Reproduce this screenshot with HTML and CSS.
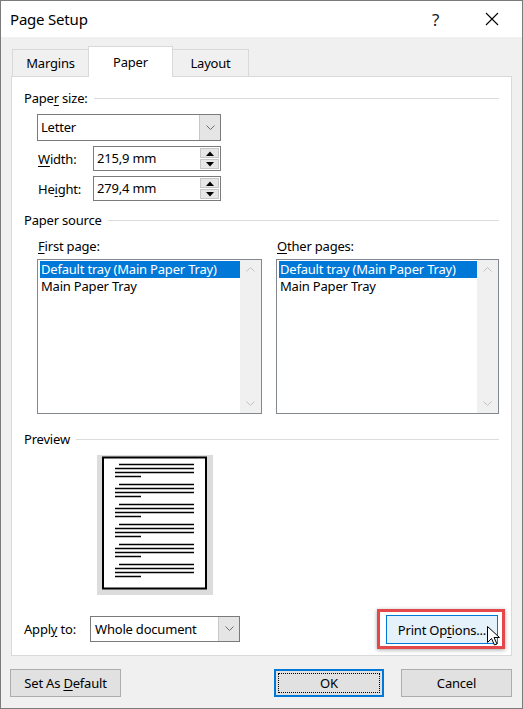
FILE: index.html
```html
<!DOCTYPE html>
<html>
<head>
<meta charset="utf-8">
<title>Page Setup</title>
<link rel="stylesheet" href="styles.css">
</head>
<body>
<div class="window">
  <div class="titlebar">
    <span class="title">Page Setup</span>
    <span class="help">?</span>
    <svg class="close" width="14" height="14" viewBox="0 0 14 14"><path d="M1 1L13 13M13 1L1 13" stroke="#000" stroke-width="1.1" fill="none"/></svg>
  </div>

  <div class="tabs">
    <div class="tab">Margins</div>
    <div class="tab active">Paper</div>
    <div class="tab">Layout</div>
  </div>

  <div class="panel">
    <div class="group-head"><span>Pape<u>r</u> size:</span><i></i></div>
    <div class="indent">
      <div class="combo wide">
        <span class="combo-text">Letter</span>
        <span class="combo-btn"><svg width="9" height="6" viewBox="0 0 9 6"><path d="M0.5 0.5L4.5 4.5L8.5 0.5" stroke="#6d6d6d" fill="none"/></svg></span>
      </div>
      <div class="field-row">
        <span class="field-label"><u>W</u>idth:</span>
        <div class="spin">
          <span class="spin-text">215,9 mm</span>
          <span class="spin-btns">
            <span class="arrow"><svg width="8" height="5" viewBox="0 0 8 5"><path d="M0 5L4 0.5L8 5Z" fill="#000"/></svg></span>
            <span class="arrow"><svg width="8" height="5" viewBox="0 0 8 5"><path d="M0 0L4 4.5L8 0Z" fill="#000"/></svg></span>
          </span>
        </div>
      </div>
      <div class="field-row">
        <span class="field-label">He<u>i</u>ght:</span>
        <div class="spin">
          <span class="spin-text">279,4 mm</span>
          <span class="spin-btns">
            <span class="arrow"><svg width="8" height="5" viewBox="0 0 8 5"><path d="M0 5L4 0.5L8 5Z" fill="#000"/></svg></span>
            <span class="arrow"><svg width="8" height="5" viewBox="0 0 8 5"><path d="M0 0L4 4.5L8 0Z" fill="#000"/></svg></span>
          </span>
        </div>
      </div>
    </div>

    <div class="group-head source-head"><span>Paper source</span><i></i></div>
    <div class="sources">
      <div class="source first">
        <div class="list-label"><u>F</u>irst page:</div>
        <div class="listbox">
          <div class="items">
            <div class="item sel">Default tray (Main Paper Tray)</div>
            <div class="item">Main Paper Tray</div>
          </div>
          <div class="scroll">
            <svg width="9" height="6" viewBox="0 0 9 6"><path d="M0.5 5.5L4.5 1.5L8.5 5.5" stroke="#c2c2c2" fill="none"/></svg>
            <svg width="9" height="6" viewBox="0 0 9 6"><path d="M0.5 0.5L4.5 4.5L8.5 0.5" stroke="#c2c2c2" fill="none"/></svg>
          </div>
        </div>
      </div>
      <div class="source other">
        <div class="list-label"><u>O</u>ther pages:</div>
        <div class="listbox">
          <div class="items">
            <div class="item sel">Default tray (Main Paper Tray)</div>
            <div class="item">Main Paper Tray</div>
          </div>
          <div class="scroll">
            <svg width="9" height="6" viewBox="0 0 9 6"><path d="M0.5 5.5L4.5 1.5L8.5 5.5" stroke="#c2c2c2" fill="none"/></svg>
            <svg width="9" height="6" viewBox="0 0 9 6"><path d="M0.5 0.5L4.5 4.5L8.5 0.5" stroke="#c2c2c2" fill="none"/></svg>
          </div>
        </div>
      </div>
    </div>

    <div class="group-head preview-head"><span>Preview</span><i></i></div>
    <div class="preview">
      <svg width="116" height="140" viewBox="0 0 116 140">
        <rect x="0" y="0" width="116" height="140" fill="#dcdcdc"/>
        <rect x="6" y="2.5" width="103" height="131" fill="#fff" stroke="#000" stroke-width="2"/>
        <g stroke="#000" stroke-width="1.3">
          <path d="M22 9.5H97M18 13.5H97M18 17.5H97M18 21.5H44"/>
          <path d="M22 29.5H97M18 33.5H97M18 37.5H97M18 41.5H44"/>
          <path d="M22 49.5H97M18 53.5H97M18 57.5H97M18 61.5H44"/>
          <path d="M22 69.5H97M18 73.5H97M18 77.5H97M18 81.5H44"/>
          <path d="M22 89.5H97M18 93.5H97M18 97.5H97M18 101.5H44"/>
          <path d="M22 109.5H97M18 113.5H97M18 117.5H97M18 121.5H44"/>
        </g>
      </svg>
    </div>

    <div class="apply-row">
      <span class="apply-label">Appl<u>y</u> to:</span>
      <div class="combo apply">
        <span class="combo-text">Whole document</span>
        <span class="combo-btn"><svg width="9" height="6" viewBox="0 0 9 6"><path d="M0.5 0.5L4.5 4.5L8.5 0.5" stroke="#6d6d6d" fill="none"/></svg></span>
      </div>
      <div class="highlight">
        <div class="btn hover"><span>Print Op<u>t</u>ions...</span></div>
        <svg class="cursor" width="13" height="20" viewBox="0 0 13 20"><path d="M0.5 0.5V16.5L4.5 12.5L7.5 19L10 18L7 11.5H12.5Z" fill="#fff" stroke="#000" stroke-width="1"/></svg>
      </div>
    </div>
  </div>

  <div class="footer">
    <div class="btn"><span>Set As <u>D</u>efault</span></div>
    <div class="btn ok"><span class="focus">OK</span></div>
    <div class="btn"><span>Cancel</span></div>
  </div>
</div>
</body>
</html>
```

FILE: styles.css
```css
* { margin: 0; padding: 0; box-sizing: border-box; }
body { font-family: "Noto Sans", "DejaVu Sans", sans-serif; font-size: 13px; letter-spacing: -0.2px; color: #000; background: #fff; }
u { text-decoration: underline; text-underline-offset: 2px; }

.window { width: 523px; height: 709px; border: 1px solid #7b7b7b; background: #f0f0f0; display: flex; flex-direction: column; }

.titlebar { height: 36px; background: #fff; display: flex; align-items: center; }
.title { font-size: 15px; padding-left: 9px; flex: 1; }
.help { font-size: 17px; width: 12px; margin-right: 41px; color: #222; }
.close { margin-right: 23px; }

.tabs { display: flex; align-items: flex-end; height: 39px; padding-left: 11px; position: relative; z-index: 1; }
.tab { width: 77px; height: 27px; border: 1px solid #d9d9d9; border-bottom: none; background: #f0f0f0; text-align: center; line-height: 26px; }
.tab + .tab { margin-left: -1px; }
.tab.active { width: 85px; height: 31px; background: #fff; margin-bottom: -1px; line-height: 30px; padding-bottom: 2px; }

.panel { margin: 0 10px; height: 580px; background: #fff; border: 1px solid #d9d9d9; padding: 13px 12px 0 12px; }

.group-head { display: flex; align-items: center; height: 16px; line-height: 16px; }
.group-head i { flex: 1; border-top: 1px solid #dcdcdc; margin-left: 6px; }

.indent { padding-left: 13px; }

.combo { display: flex; height: 27px; border: 1px solid #7a7a7a; background: #fff; }
.combo.wide { width: 184px; margin-top: 8px; }
.combo-text { flex: 1; padding-left: 3px; line-height: 25px; }
.combo-btn { width: 21px; background: #e5e5e5; border-left: 1px solid #c8c8c8; display: flex; align-items: center; justify-content: center; }

.field-row { display: flex; align-items: center; margin-top: 5px; }
.field-label { width: 56px; padding-left: 1px; }
.spin { display: flex; width: 128px; height: 25px; border: 1px solid #7a7a7a; }
.spin-text { flex: 1; padding-left: 3px; line-height: 23px; }
.spin-btns { width: 20px; padding: 1px 1px 1px 0; display: flex; flex-direction: column; gap: 1px; }
.arrow { flex: 1; background: #e6e6e6; border: 1px solid #c6c6c6; display: flex; align-items: center; justify-content: center; }

.source-head { margin-top: 11px; }
.sources { display: flex; padding-left: 13px; margin-top: 10px; }
.source.first { width: 225px; }
.source.other { width: 223px; margin-left: 14px; }
.list-label { height: 16px; line-height: 16px; padding-left: 1px; }
.listbox { margin-top: 5px; height: 155px; border: 1px solid #828790; display: flex; }
.items { flex: 1; padding: 1px 0 0 2px; }
.item { height: 17px; line-height: 16px; padding-left: 1px; white-space: nowrap; }
.item.sel { background: #0078d7; color: #fff; }
.scroll { width: 21px; background: #f0f0f0; display: flex; flex-direction: column; justify-content: space-between; align-items: center; padding: 6px 0 6px; }

.preview-head { margin-top: 17px; }
.preview { padding-left: 73px; margin-top: 8px; height: 140px; }
.preview svg { display: block; }

.apply-row { display: flex; align-items: center; margin-top: 14px; }
.apply-label { width: 66px; }
.combo.apply { width: 150px; height: 26px; }
.combo.apply .combo-text { line-height: 24px; padding-left: 4px; }
.highlight { margin-left: auto; margin-right: -6px; border: 3px solid #e5484a; padding: 3px 4px 2px 6px; box-shadow: 0 1px 4px rgba(0,0,0,.35); position: relative; }
.cursor { position: absolute; left: 107px; top: 14px; }

.btn { height: 28px; border: 1px solid #adadad; background: #e1e1e1; display: flex; align-items: center; justify-content: center; }
.btn.hover { width: 112px; height: 29px; background: #e5f1fb; border-color: #0078d7; }

.footer { display: flex; padding: 13px 10px 0 9px; }
.footer .btn { width: 111px; }
.footer .btn.ok { width: 110px; margin-left: auto; margin-right: 17px; border: 2px solid #0078d7; padding: 2px; }
.focus { flex: 1; align-self: stretch; border: 1px dotted #000; display: flex; align-items: center; justify-content: center; }
```
